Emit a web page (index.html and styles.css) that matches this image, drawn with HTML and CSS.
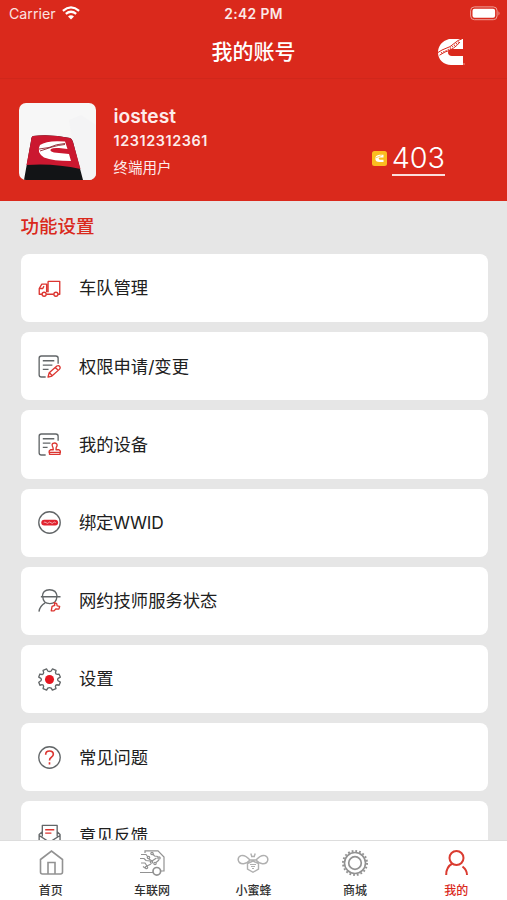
FILE: index.html
```html
<!DOCTYPE html>
<html lang="zh-CN">
<head>
<meta charset="utf-8">
<title>我的账号</title>
<link rel="stylesheet" href="styles.css">
</head>
<body>
<svg class="defs" aria-hidden="true">
  <symbol id="brand" viewBox="0 0 28 28">
    <path fill="#fff" d="M26 1H12C5 3 1 8 1 14.5C1 22 7 27 14 27H26V18H15C12.500 18 11 16.500 11 14.500S12.500 11 15 11H26Z"/>
    <path fill="none" stroke="#da291c" stroke-width="1" d="M1 14.500L5 12Q13 10 21 2.500L25 .8M2.500 17.200L8 14Q17 11.500 23 4"/>
    <path stroke="#da291c" stroke-width="1.100" stroke-dasharray="1.200 1.300" d="M4 15Q14 11 22 3.300" fill="none"/>
    <circle cx="27" cy="26" r=".7" fill="#f6beb8"/>
  </symbol>
</svg>
<div class="app">
  <header class="top">
    <div class="status">
      <div class="carrier"><span>Carrier</span>
        <svg width="18" height="14" viewBox="0 0 18 14" fill="none" stroke="#fff" stroke-width="2.200"><path d="M.9 4.800Q9-2 17.100 4.800M3.800 7.900Q9 3.600 14.200 7.900"/><path d="M9 13.400L6 10.400Q9 7.900 12 10.400Z" fill="#fff" stroke="none"/></svg>
      </div>
      <span class="time">2:42 PM</span>
      <svg class="battery" width="31" height="15" viewBox="0 0 31 15"><rect x=".6" y=".9" width="26.500" height="12.800" rx="3.800" fill="none" stroke="#eda099"/><rect x="2.500" y="2.800" width="22.600" height="9" rx="2" fill="#fff"/><path d="M28.500 5.200Q30.500 7.300 28.500 9.400Z" fill="#eda099"/></svg>
    </div>
    <div class="nav">
      <h1>我的账号</h1>
      <svg class="nav-logo" width="28" height="28"><use href="#brand"/></svg>
    </div>
  </header>
  <section class="profile">
    <svg class="avatar" width="77" height="77" viewBox="0 0 77 77">
      <rect width="77" height="77" fill="#f7f7f7"/>
      <path d="M50 17L62 12L77 22V77H60Z" fill="#f4f4f5"/>
      <path d="M14 33Q32 31 51 35Q53 35.500 54 39L64 77H5L12 38Q12 34 14 33Z" fill="#121416"/>
      <path d="M14 33Q32 31 51 35Q53 35.500 54 39L61.500 66Q35 60 7.500 62L12 38Q12 34 14 33Z" fill="#cb1830"/>
      <path d="M46 38.500Q28 37 21 42Q17 49 25 54.500Q34 58 52 58L50 51L35 49.500Q30 48 32 46Q34 44.500 40 45L48.500 46Z" fill="#fff"/>
      <path d="M20 46L30 44.500Q37 41 46 40.500M21 48L33 44Q40 42 46 41.500" fill="none" stroke="#8e2430" stroke-width=".9"/>
    </svg>
    <div class="person">
      <div class="name">iostest</div>
      <div class="phone">12312312361</div>
      <div class="role">终端用户</div>
    </div>
    <div class="points">
      <svg width="15" height="15" viewBox="0 0 15 15"><rect width="15" height="15" rx="2.500" fill="#fbbd20"/><path d="M11.500 3.800H7.500Q3.300 4.300 3.300 7.500Q3.300 11 7.500 11H11.500V8.700H8Q6.700 8.700 6.700 7.600T8 6.400H11.500Z" fill="#fff"/><path d="M3.500 7L9.500 4.500" stroke="#fbbd20" stroke-width=".7"/></svg>
      <span>403</span>
    </div>
  </section>
  <main>
    <h2>功能设置</h2>
    <div class="list">
      <div class="card"><svg class="ic red" viewBox="0 0 24 24"><path d="M10.500 4.500H22.700V18H20.900M16.500 18H8.600M4.200 18H1.300V12L4 7.500H9V16M10.500 4.500V16M2 12H5L6.200 9.500"/><circle cx="6.400" cy="18" r="2.100"/><circle cx="18.700" cy="18" r="2.100"/></svg><span>车队管理</span></div>
      <div class="card"><svg class="ic" viewBox="0 0 24 24"><path d="M8 23H3.500Q1.200 23 1.200 20.700V3.300Q1.200 1 3.500 1H18.500Q21 1 21 3.300V9M5 6H17M5 10.500H15M5 15H11"/><path class="red" d="M10.500 23L11.700 18.500L19.700 11.500Q21.500 10.400 22.700 12Q23.700 13.700 22.300 15L14.500 22ZM12 18.600L14.800 21.500M18.300 13L21 16"/></svg><span>权限申请/变更</span></div>
      <div class="card"><svg class="ic" viewBox="0 0 24 24"><path d="M8 23H3.500Q1.200 23 1.200 20.700V3.300Q1.200 1 3.500 1H18.500Q21 1 21 3.300V8M5 6H17M5 10.500H13M5 15H10"/><path class="red" d="M16 17.500L15.600 15Q13.700 11.500 16 10.700Q18 9.900 19.600 11.500Q20.500 13 19 15L18.800 17.500H22Q23.500 18 23.500 20.200H11.500Q11.500 18 13 17.500ZM13 22.300H22M12 20.500V22.300H23V20.500"/></svg><span>我的设备</span></div>
      <div class="card"><svg class="ic" viewBox="0 0 24 24"><circle cx="12" cy="12" r="11.200"/><rect x="3.400" y="9" width="17.600" height="6.200" rx="3.100" fill="#e12430" stroke="none"/><path d="M6 12.200Q7 10.800 8.500 12.200T11 12.200T13.500 12.200T16 12.200T18.500 12.200" stroke="#f3b8bb" stroke-width="1"/></svg><span class="latin">绑定WWID</span></div>
      <div class="card"><svg class="ic" viewBox="0 0 24 24"><path d="M4.500 8Q4.800.8 12 .8Q19.200.8 20 8M3 8.100H23.500M5 8Q5.200 15.200 12.400 15.200Q19.300 15.200 19.700 8M7.500 14.500Q2 17.500 1 23.500"/><path class="red" d="M13.800 22.800L14.700 18.200L17.500 17L17 14.200L19.500 15.300L20 17.700L22.600 18.200L21.800 21L18.800 20.700L16.700 22.800Z"/></svg><span>网约技师服务状态</span></div>
      <div class="card"><svg class="ic" viewBox="0 0 24 24"><path d="M9 1L10.200 3.100Q12 4.100 13.800 3.100L15 1L18.800 2.600L18.200 5Q18.300 6.700 20.500 6.700L22 6.500L23.300 9.500L21 10.800Q20 12 21 13.300L23.300 14.800L22 18L19.700 17.500Q18 17.800 18.200 19.500L18.800 21.600L15 23L13.800 21Q12 20 10.200 21L9 23L5.300 21.500L5.900 19Q5.700 17.400 4.300 17.400L2 18L.8 14.800L3 13.300Q4 12 3 10.800L.8 9.500L2 6.300L4.400 6.800Q6 6.500 5.900 4.800L5.300 2.500Z"/><circle cx="12" cy="12" r="4.700" fill="#e51620" stroke="none"/></svg><span>设置</span></div>
      <div class="card"><svg class="ic" viewBox="0 0 24 24"><circle cx="12" cy="12" r="11.200"/><path class="red thick" d="M8 9Q8 5.200 12 5.200T16 8.700Q16 10.700 13.700 12Q12 13 12 15M12 17V19.200"/></svg><span>常见问题</span></div>
      <div class="card"><svg class="ic" viewBox="0 0 24 24"><path d="M4.500 13V1.500H20V13M4.500 8L1.200 11V23H23V11L20 8M1.200 12L12 19L23 12"/><path class="red" d="M7.500 6H17M7.500 9.500H14"/></svg><span>意见反馈</span></div>
    </div>
  </main>
  <footer class="tabs">
    <div class="tab"><svg width="28" height="28" viewBox="0 0 28 28"><path d="M3.500 10.500L14.500 2L25.500 10.500V23Q25.500 25 23.500 25H5.500Q3.500 25 3.500 23ZM11 25V13.500H18V25"/></svg><span>首页</span></div>
    <div class="tab"><svg width="28" height="28" viewBox="0 0 28 28"><g stroke-width="1.200"><path d="M7 4V1.800H20L26 8V22H23M2 23.500H15M3 5.500H8L10 8M14.800 5L16.500 7L20 7.500M11 10L14 12L18.500 9M2 9.500H6L8 11.500L12 12M3 14H7L9 17L13 15M18 13.500L21 11M7 19L5 17.500"/><circle cx="10.500" cy="8.500" r="1.200"/><circle cx="14" cy="4.500" r="1.200"/><circle cx="21" cy="9" r="1.200"/><circle cx="13.500" cy="13" r="1.200"/><circle cx="17" cy="14.500" r="1.200"/><circle cx="8.500" cy="18.500" r="1.200"/></g><circle cx="18.800" cy="22.300" r="3.800" stroke-width="1.700"/></svg><span>车联网</span></div>
    <div class="tab bee"><svg width="32" height="28" viewBox="0 0 32 28"><path stroke-width="1.400" d="M13 11Q8 5.500 4 6.700Q.8 8 1.200 11Q2 15 6.500 14.700Q10 14.500 13 11ZM19 11Q24 5.500 28 6.700Q31.200 8 30.800 11Q30 15 25.500 14.700Q22 14.500 19 11ZM13 11H19M14.800 7.500L13.800 4.500M17.200 7.500L18.200 4.500M14 7.500H18M16 12L10.500 14.500V20L16 23.300L21.500 20V14.500Z"/><path stroke-width="1" d="M13 15.500H19M14 17.500H18M15 19.500H17"/></svg><span>小蜜蜂</span></div>
    <div class="tab"><svg width="28" height="28" viewBox="0 0 28 28"><circle cx="14" cy="14" r="12" stroke-width="2" stroke-dasharray="1.800 1.970"/><circle cx="14" cy="14" r="10.500"/><circle cx="14" cy="14" r="6.300" stroke-width="1.700"/></svg><span>商城</span></div>
    <div class="tab active"><svg width="28" height="28" viewBox="0 0 28 28"><circle cx="14.500" cy="9" r="7"/><path d="M10.500 14.500Q4 18 4.200 26M20.500 17.500Q25 21 25 26"/></svg><span>我的</span></div>
  </footer>
</div>
</body>
</html>
```
FILE: styles.css
```css
* { box-sizing: border-box; }
body { margin: 0; font-family: Inter, "Noto Sans CJK SC", sans-serif; color: #202020; }
h1, h2 { margin: 0; }
svg { display: block; flex: none; }
.defs { width: 0; height: 0; float: left; }
.app { height: 900px; width: 100%; display: flex; flex-direction: column; background: #e6e6e6; overflow: hidden; }
.top { flex: none; height: 79px; background: #da291c; color: #fff; border-bottom: 1px solid #d0271b; }
.status { height: 28px; display: grid; grid-template-columns: 1fr auto 1fr; align-items: center; padding: 0 6px 0 9px; }
.carrier { display: flex; align-items: center; gap: 6px; font-size: 14.200px; color: #fbe3e1; }
.carrier span { margin-top: -1px; }
.carrier svg { margin-top: -3px; }
.time { font-size: 13.800px; font-weight: 600; letter-spacing: .4px; color: #fbe9e8; margin-left: -3px; }
.battery { justify-self: end; margin-top: -1px; }
.nav { height: 50px; display: grid; grid-template-columns: 1fr auto 1fr; align-items: center; padding: 0 42px; }
.nav h1 { grid-column: 2; font-size: 21px; line-height: 28px; font-weight: 500; margin-top: -2px; }
.nav-logo { justify-self: end; margin-top: -3px; }
.profile { flex: none; height: 122px; background: #da291c; display: flex; padding: 24px 62px 0 19px; color: #fff; }
.avatar { border-radius: 7px; }
.person { margin-left: 17.500px; color: #fdeceb; }
.name { font-size: 19.200px; line-height: 24px; font-weight: 600; margin-top: 1px; }
.phone { font-size: 14.400px; line-height: 18px; font-weight: 600; margin-top: 4px; letter-spacing: .6px; }
.role { font-size: 14.500px; line-height: 20px; margin-top: 8px; }
.points { margin-left: auto; display: flex; align-items: center; gap: 5px; height: 36px; margin-top: 37px; font-size: 28.800px; line-height: 34px; }
.points span { border-bottom: 2px solid #fbdedc; font-weight: 300; height: 35px; }
main { flex: 1; min-height: 0; overflow: hidden; padding: 11px 19.500px 0 20.500px; }
h2 { font-size: 18.500px; line-height: 28px; font-weight: 500; color: #da291c; }
.list { display: grid; gap: 9.900px; margin-top: 14px; }
.card { height: 68.300px; border-radius: 8px; background: #fff; display: flex; align-items: center; gap: 18px; padding-left: 17.500px; font-size: 17.300px; }
.card span { margin-top: -2.500px; }
.latin { letter-spacing: -.3px; }
.ic { width: 23px; height: 23px; fill: none; stroke: #626668; stroke-width: 1.400; stroke-linejoin: round; }
.red { stroke: #dc3530; }
.thick { stroke-width: 1.700; }
.tabs { flex: none; height: 60px; background: #fff; border-top: 1px solid #ddd; display: grid; grid-template-columns: repeat(5, 1fr); }
.tab { display: flex; flex-direction: column; align-items: center; padding-top: 8px; font-size: 12px; line-height: 18px; font-weight: 500; color: #303030; }
.tab svg { fill: none; stroke: #929292; stroke-width: 1.600; }
.tab span { margin-top: 5px; }
.tab.bee svg { stroke: #b0b0b0; }
.tab.active { color: #da291c; }
.tab.active svg { stroke: #da3b30; stroke-width: 2; }
```
